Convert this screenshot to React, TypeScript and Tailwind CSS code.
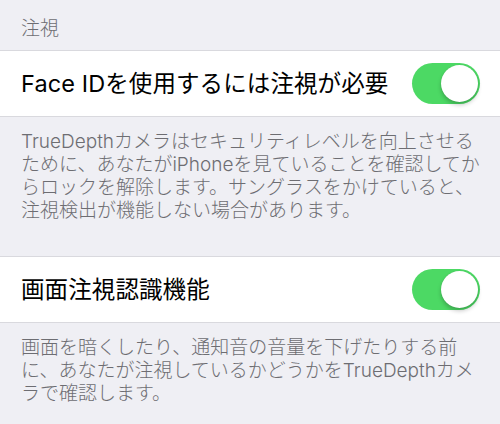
const font = {
  fontFamily: '"Inter", "Noto Sans CJK JP", sans-serif',
};

function Toggle() {
  return (
    <div className="w-[68px] h-[41px] shrink-0 rounded-full bg-[#4cd964] p-[2px] flex justify-end">
      <div className="w-[37px] h-[37px] rounded-full bg-white shadow-[0_3px_4px_rgba(0,0,0,0.22),0_0_1px_rgba(0,0,0,0.15)]" />
    </div>
  );
}

function SwitchRow({ label }: { label: string }) {
  return (
    <div className="h-[67px] bg-white border-y border-[#d9d9de] flex items-center justify-between pl-[21px] pr-[20px]">
      <span className="text-[23.5px] leading-[30px] text-black tracking-[0.1px]">{label}</span>
      <Toggle />
    </div>
  );
}

function Footer({ lines, className }: { lines: string[]; className: string }) {
  return (
    <div className={`pl-[21px] text-[19px] leading-[23px] font-light text-[#6d6d72] ${className}`}>
      {lines.map((l) => (
        <div key={l} className="whitespace-nowrap">
          {l}
        </div>
      ))}
    </div>
  );
}

export default function App() {
  return (
    <div className="w-[500px] h-[424px] overflow-hidden bg-[#efeff4]" style={font}>
      <div className="pl-[21px] pt-[17px] pb-[10px] text-[19px] leading-[23px] font-light text-[#6d6d72]">
        注視
      </div>
      <SwitchRow label="Face IDを使用するには注視が必要" />
      <Footer
        className="pt-[13px] pb-[34px]"
        lines={[
          "TrueDepthカメラはセキュリティレベルを向上させる",
          "ために、あなたがiPhoneを見ていることを確認してか",
          "らロックを解除します。サングラスをかけていると、",
          "注視検出が機能しない場合があります。",
        ]}
      />
      <SwitchRow label="画面注視認識機能" />
      <Footer
        className="pt-[13px]"
        lines={[
          "画面を暗くしたり、通知音の音量を下げたりする前",
          "に、あなたが注視しているかどうかをTrueDepthカメ",
          "ラで確認します。",
        ]}
      />
    </div>
  );
}
